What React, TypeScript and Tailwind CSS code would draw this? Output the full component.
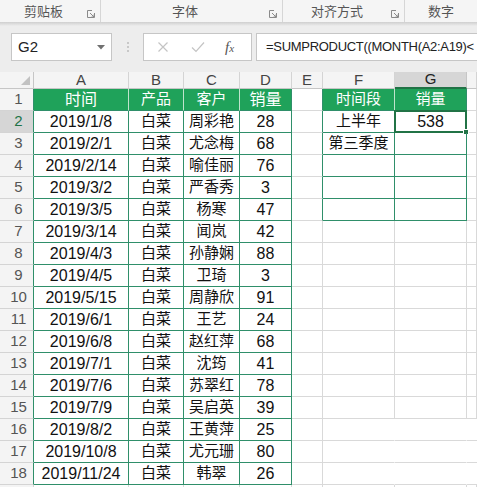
import React from 'react';

const ROWS: [string, string, string, string][] = [
  ['2019/1/8', '白菜', '周彩艳', '28'],
  ['2019/2/1', '白菜', '尤念梅', '68'],
  ['2019/2/14', '白菜', '喻佳丽', '76'],
  ['2019/3/2', '白菜', '严香秀', '3'],
  ['2019/3/5', '白菜', '杨寒', '47'],
  ['2019/3/14', '白菜', '闻岚', '42'],
  ['2019/4/3', '白菜', '孙静娴', '88'],
  ['2019/4/5', '白菜', '卫琦', '3'],
  ['2019/5/15', '白菜', '周静欣', '91'],
  ['2019/6/1', '白菜', '王艺', '24'],
  ['2019/6/8', '白菜', '赵红萍', '68'],
  ['2019/7/1', '白菜', '沈筠', '41'],
  ['2019/7/6', '白菜', '苏翠红', '78'],
  ['2019/7/9', '白菜', '吴启英', '39'],
  ['2019/8/2', '白菜', '王黄萍', '25'],
  ['2019/10/8', '白菜', '尤元珊', '80'],
  ['2019/11/24', '白菜', '韩翠', '26'],
];

const COLS = ['A', 'B', 'C', 'D', 'E', 'F', 'G', 'H'];

function Launcher() {
  return (
    <svg width="8" height="8" viewBox="0 0 8 8" className="shrink-0">
      <path d="M0.5 0.5H5M0.5 0.5V7.5H7.5V3" stroke="#8a8a8a" fill="none" />
      <path d="M3 3L7 7M7 4.5V7H4.5" stroke="#8a8a8a" fill="none" />
    </svg>
  );
}

function RibbonGroup({ label, width, last }: { label: string; width: string; last?: boolean }) {
  return (
    <div className={`${width} flex items-center h-full ${last ? '' : 'border-r border-[#d6d6d6]'}`}>
      <span className="flex-1 text-center">{label}</span>
      {!last && <span className="mr-[5px] mt-[5px]"><Launcher /></span>}
    </div>
  );
}

export default function App() {
  const green = 'border-[#2f8f6a]';
  const grid = 'border-[#d9d9d9]';

  const renderRow = (r: number) => {
    const data = r >= 2 && r <= 18 ? ROWS[r - 2] : null;
    const isHead = r === 1;
    const inTable = r >= 1 && r <= 18;
    const inSummary = r >= 1 && r <= 6;
    const openRight = r >= 16 && r <= 18;
    const cells: React.ReactNode[] = [];

    // row number (the partly hidden last row shows none)
    cells.push(
      <div
        key="n"
        className={`flex items-center justify-center pl-1 border-b border-r text-[15px] ${
          r === 2 ? 'bg-[#d6d6d6] text-[#217346]' : 'bg-[#f4f4f4] text-[#555]'
        } border-b-[#d4d4d4] ${inTable ? 'border-r-[#2f8f6a]' : 'border-r-[#d4d4d4]'}`}
      >
        {r <= 18 ? r : ''}
      </div>
    );

    // A-D source table
    const abcd = isHead ? ['时间', '产品', '客户', '销量'] : data ?? ['', '', '', ''];
    abcd.forEach((v, i) => {
      const size = i === 0 || i === 3 ? 'text-[16px]' : 'text-[15px]';
      cells.push(
        <div
          key={`c${i}`}
          className={`flex items-center justify-center border-r border-b ${size} ${
            isHead
              ? `bg-[#1fa25a] text-white border-b-[#2f8f6a] ${i === 3 ? 'border-r-[#2f8f6a]' : 'border-r-[#bfe3cc]'}`
              : inTable
              ? `text-[#111] ${green}`
              : grid
          }`}
        >
          {v}
        </div>
      );
    });

    // E
    cells.push(
      <div
        key="e"
        className={`border-r border-b border-b-[#d9d9d9] ${inSummary ? 'border-r-[#2f8f6a]' : 'border-r-[#d9d9d9]'}`}
      />
    );

    // F-G summary table
    const fg = isHead ? ['时间段', '销量'] : r === 2 ? ['上半年', '538'] : r === 3 ? ['第三季度', ''] : ['', ''];
    fg.forEach((v, i) => {
      const base = 'relative flex items-center justify-center border-r border-b text-[15px]';
      let tone = '';
      if (isHead) tone = `bg-[#1fa25a] text-white border-b-[#2f8f6a] ${i === 1 ? 'border-r-[#2f8f6a]' : 'border-r-[#bfe3cc]'}`;
      else if (inSummary) tone = `text-[#111] ${green}`;
      else if (openRight) tone = 'border-b-[#d9d9d9] border-r-transparent';
      else tone = grid;
      cells.push(
        <div key={`s${i}`} className={`${base} ${tone} ${i === 1 && r === 2 ? 'text-[16px]' : ''}`}>
          {v}
          {r === 2 && i === 1 && (
            <div className="absolute -left-px -top-px -right-px -bottom-px border-2 border-[#217346]">
              <div className="absolute -right-[4px] -bottom-[4px] w-[6px] h-[6px] bg-[#217346] border border-white" />
            </div>
          )}
        </div>
      );
    });

    // H
    cells.push(
      <div key="h" className={`border-b border-b-[#d9d9d9] ${openRight ? '' : 'border-r border-r-[#d9d9d9]'}`} />
    );

    return <React.Fragment key={r}>{cells}</React.Fragment>;
  };

  return (
    <div className="w-[477px] h-[487px] overflow-hidden bg-white font-['Liberation_Sans','Noto_Sans_CJK_SC',sans-serif]">
      {/* ribbon group captions */}
      <div className="h-[22px] flex bg-[#f5f5f5] text-[13px] text-[#555] font-['Noto_Sans_CJK_SC',sans-serif]">
        <RibbonGroup label="剪贴板" width="w-[101px]" />
        <RibbonGroup label="字体" width="w-[182px]" />
        <RibbonGroup label="对齐方式" width="w-[122px]" />
        <RibbonGroup label="数字" width="flex-1" last />
      </div>
      <div className="h-[4px] bg-gradient-to-b from-[#cfcfcf] to-[#ededed]" />

      {/* formula bar */}
      <div className="bg-[#ededed] pt-[7px] pb-[11px] pl-[11px] flex items-center gap-0">
        <div className="w-[101px] h-[28px] bg-white border border-[#c6c6c6] flex items-center justify-between pl-[6px] pr-[6px] text-[15px] text-[#222]">
          <span>G2</span>
          <svg width="8" height="5" viewBox="0 0 8 5">
            <path d="M0 0H8L4 4.5Z" fill="#707070" />
          </svg>
        </div>
        <div className="w-[31px] flex flex-col items-center gap-[2px]">
          <span className="w-[2px] h-[2px] bg-[#c8c8c8]" />
          <span className="w-[2px] h-[2px] bg-[#c8c8c8]" />
          <span className="w-[2px] h-[2px] bg-[#c8c8c8]" />
        </div>
        <div className="w-[109px] h-[28px] bg-white border border-[#c6c6c6] flex items-center pl-[13px]">
          <svg width="12" height="12" viewBox="0 0 12 12" className="mr-[22px]">
            <path d="M1.5 1.5L10.5 10.5M10.5 1.5L1.5 10.5" stroke="#c4c4c4" strokeWidth="1.2" />
          </svg>
          <svg width="14" height="12" viewBox="0 0 14 12" className="mr-[20px]">
            <path d="M1 6.5L5 10.5L13 1.5" stroke="#c4c4c4" strokeWidth="1.2" fill="none" />
          </svg>
          <span className="font-['Liberation_Serif',serif] italic text-[15px] text-[#555]">
            f<span className="text-[11px]">x</span>
          </span>
        </div>
        <div className="ml-[4px] flex-1 h-[28px] bg-white border border-[#c6c6c6] border-r-0 flex items-center pl-[9px] text-[13px] tracking-[-0.3px] text-[#222] whitespace-nowrap overflow-hidden">
          =SUMPRODUCT((MONTH(A2:A19)&lt;
        </div>
      </div>

      {/* sheet */}
      <div className="grid grid-cols-[34px_95px_55px_56px_52px_31px_72px_72px_1fr] auto-rows-[22px] [grid-template-rows:17px]">
        <div className="relative bg-[#f4f4f4] border-r border-b border-[#c6c6c6]">
          <svg width="9" height="9" viewBox="0 0 9 9" className="absolute right-[3px] bottom-[3px]">
            <path d="M9 0V9H0Z" fill="#c2c2c2" />
          </svg>
        </div>
        {COLS.map((c) => (
          <div
            key={c}
            className={`flex items-center justify-center border-r text-[15px] ${
              c === 'G'
                ? 'bg-[#d6d6d6] text-[#222] border-r-[#c6c6c6] border-b-2 border-b-[#217346]'
                : 'bg-[#f4f4f4] text-[#444] border-b border-[#d4d4d4] border-b-[#c6c6c6]'
            }`}
          >
            {c !== 'H' ? c : ''}
          </div>
        ))}
        {Array.from({ length: 19 }, (_, i) => renderRow(i + 1))}
      </div>
    </div>
  );
}
